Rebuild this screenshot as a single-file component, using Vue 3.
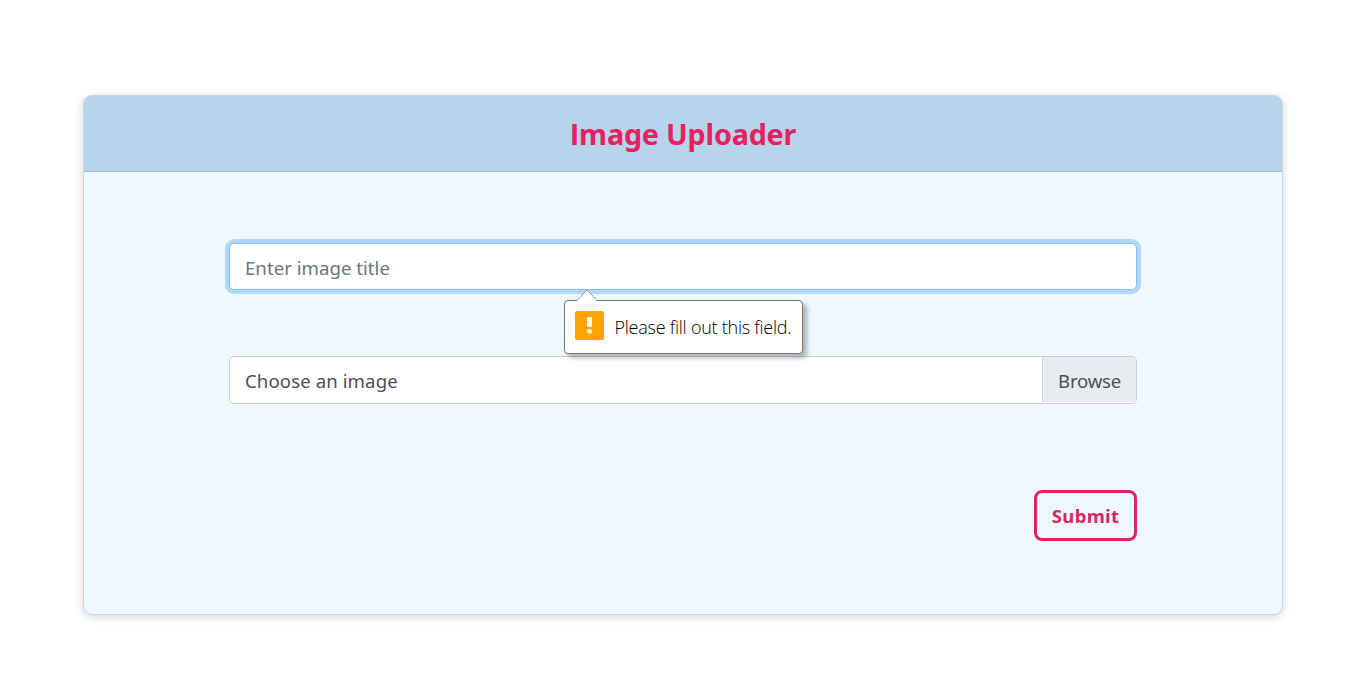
<script setup>
import { ref } from 'vue'

const title = ref('')
</script>

<template>
  <main class="page">
    <section class="card">
      <header class="card-header"><h1>Image Uploader</h1></header>
      <form class="card-body" novalidate @submit.prevent>
        <div class="field focused">
          <input v-model="title" class="title-input" type="text" placeholder="Enter image title" aria-label="Image title" />
          <div class="bubble" role="alert">
            <svg class="bubble-arrow" width="22" height="12" viewBox="0 0 22 12">
              <path d="M1 11.5L11 1l10 10.5" fill="#fff" stroke="#8a9096" />
              <path d="M1.5 11.5h19" stroke="#fff" />
            </svg>
            <svg class="bubble-icon" width="29" height="29" viewBox="0 0 29 29">
              <rect width="29" height="29" rx="2" fill="#ffa300" />
              <rect x="12" y="6.2" width="5" height="9.6" fill="#fff" />
              <circle cx="14.5" cy="20.3" r="2.4" fill="#fff" />
            </svg>
            <span class="bubble-text">Please fill out this field.</span>
          </div>
        </div>
        <label class="field file">
          <span class="file-name">Choose an image</span>
          <span class="browse">Browse</span>
        </label>
        <button class="submit" type="submit">Submit</button>
      </form>
    </section>
  </main>
</template>

<style>
body {
  background: #fff;
}
</style>

<style scoped>
.page {
  box-sizing: border-box;
  height: 691px;
  padding: 95px 0 0 83px;
  overflow: hidden;
  font-family: "Noto Sans", "Open Sans", sans-serif;
  font-size: 18.6px;
}
.card {
  box-sizing: border-box;
  width: 1200px;
  height: 520px;
  border: 1px solid #ccd7e0;
  border-radius: 9px;
  background: #eff7ff;
  box-shadow: 0 2px 10px rgba(0, 0, 0, 0.16);
}
.card-header {
  height: 75px;
  border-bottom: 1px solid #9fbdd3;
  border-radius: 8px 8px 0 0;
  background: #b6d4eb;
}
h1 {
  margin: 0;
  text-align: center;
  color: #e6215f;
  font-size: 28.7px;
  line-height: 75px;
  font-weight: 700;
  letter-spacing: -0.18px;
}
h1::first-letter {
  font-family: "Open Sans", sans-serif;
}
.card-body {
  display: flex;
  flex-direction: column;
  padding: 71px 145px 0;
}
.field {
  box-sizing: border-box;
  height: 48px;
  border: 1px solid #c6cfd7;
  border-radius: 5px;
  background: #fff;
}
.focused {
  position: relative;
  height: 47px;
  border-color: #80bdff;
  box-shadow: 0 0 0 4px #b3d8ff;
}
.title-input {
  box-sizing: border-box;
  display: block;
  width: 100%;
  height: 45px;
  margin: 0;
  padding: 1px 15px 0;
  border: 0;
  outline: 0;
  background: transparent;
  font: inherit;
  letter-spacing: 0.03px;
}
.title-input::placeholder {
  color: #6c757d;
  opacity: 1;
}
.bubble {
  position: absolute;
  z-index: 2;
  top: 56px;
  left: 334px;
  box-sizing: border-box;
  width: 239px;
  height: 54px;
  display: flex;
  padding: 10px;
  border: 1px solid #72777b;
  border-radius: 4px;
  background: #fff;
  box-shadow: 4px 4px 5px rgba(0, 0, 0, 0.28);
  color: #111;
}
.bubble-arrow {
  position: absolute;
  top: -12px;
  left: 11px;
}
.bubble-icon {
  flex: none;
}
.bubble-text {
  margin-left: 10.5px;
  font-family: "Open Sans", "Noto Sans", sans-serif;
  font-weight: 340;
  font-size: 18px;
  line-height: 33px;
  letter-spacing: -0.24px;
  color: #000;
  white-space: nowrap;
}
.file {
  display: flex;
  margin-top: 66px;
  color: #495057;
  line-height: 48px;
}
.file-name {
  flex: 1;
  padding-left: 15px;
  letter-spacing: 0.1px;
}
.browse {
  box-sizing: border-box;
  width: 94px;
  height: 45px;
  padding-left: 15px;
  border-left: 1px solid #ced4da;
  border-radius: 0 4px 4px 0;
  background: #e9ecef;
  letter-spacing: -0.2px;
}
.submit {
  box-sizing: border-box;
  align-self: flex-end;
  width: 103px;
  height: 51px;
  margin-top: 86px;
  padding: 0;
  border: 3px solid #d9265f;
  border-radius: 8px;
  background: transparent;
  color: #d9265f;
  font: inherit;
  font-weight: 700;
  line-height: 45px;
  letter-spacing: 0.28px;
}
</style>
